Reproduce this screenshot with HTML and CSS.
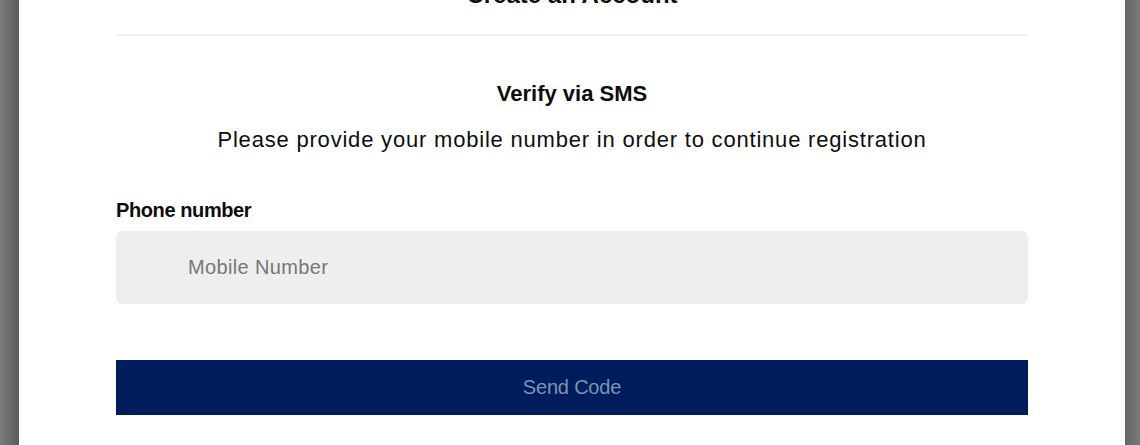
FILE: index.html
```html
<!DOCTYPE html>
<html lang="en">
<head>
<meta charset="utf-8">
<title>Create an Account</title>
<link rel="stylesheet" href="styles.css">
</head>
<body>
<div class="backdrop">
  <div class="modal">
    <div class="modal-header">
      <h1 class="modal-title">Create an Account</h1>
      <div class="divider"></div>
    </div>
    <div class="modal-body">
      <h2 class="verify-title">Verify via SMS</h2>
      <p class="verify-text">Please provide your mobile number in order to continue registration</p>
      <form class="phone-form">
        <label class="field-label" for="phone">Phone number</label>
        <input class="field-input" id="phone" type="tel" placeholder="Mobile Number">
        <button class="send-btn" type="button">Send Code</button>
      </form>
    </div>
  </div>
</div>
</body>
</html>
```
FILE: styles.css
```css
* { box-sizing: border-box; }
html, body {
  margin: 0;
  padding: 0;
  height: 100%;
  overflow: hidden;
}
body {
  font-family: "Liberation Sans", Arial, sans-serif;
  color: #0d0d0d;
}
.backdrop {
  display: flex;
  height: 445px;
  background: linear-gradient(to right, #7c7c7c 0px, #5c5c5c 18px, #5c5c5c 1125px, #666 1126px, #7a7a7a 1140px);
}
.modal {
  margin-left: 19px;
  width: 1106px;
  height: 465px;
  margin-top: -20px;
  background: #fff;
  padding: 0 97px 0 97px;
}
.modal-header {
  display: flex;
  flex-direction: column;
}
.modal-title {
  margin: 0;
  font-size: 24px;
  line-height: 30px;
  font-weight: 700;
  text-align: center;
}
.divider {
  margin-top: 24px;
  height: 2px;
  background: #f1f1f1;
}
.modal-body {
  display: flex;
  flex-direction: column;
}
.verify-title {
  margin: 45px 0 0;
  font-size: 22px;
  line-height: 26px;
  font-weight: 700;
  text-align: center;
}
.verify-text {
  margin: 20px 0 0;
  font-size: 22px;
  line-height: 26px;
  letter-spacing: 0.8px;
  text-align: center;
}
.phone-form {
  display: flex;
  flex-direction: column;
  margin-top: 45px;
}
.field-label {
  font-size: 20px;
  line-height: 24px;
  font-weight: 700;
  letter-spacing: -0.4px;
}
.field-input {
  margin-top: 9px;
  height: 73px;
  border: none;
  border-radius: 6px;
  background: #eeeeee;
  padding: 0 0 0 72px;
  font-family: inherit;
  font-size: 20px;
  letter-spacing: 0.35px;
  color: #111;
  outline: none;
}
.field-input::placeholder { color: #777; }
.send-btn {
  margin-top: 56px;
  height: 55px;
  border: none;
  background: #001d5b;
  color: #7f91b9;
  font-family: inherit;
  font-size: 20px;
  letter-spacing: -0.2px;
  cursor: pointer;
}
```
